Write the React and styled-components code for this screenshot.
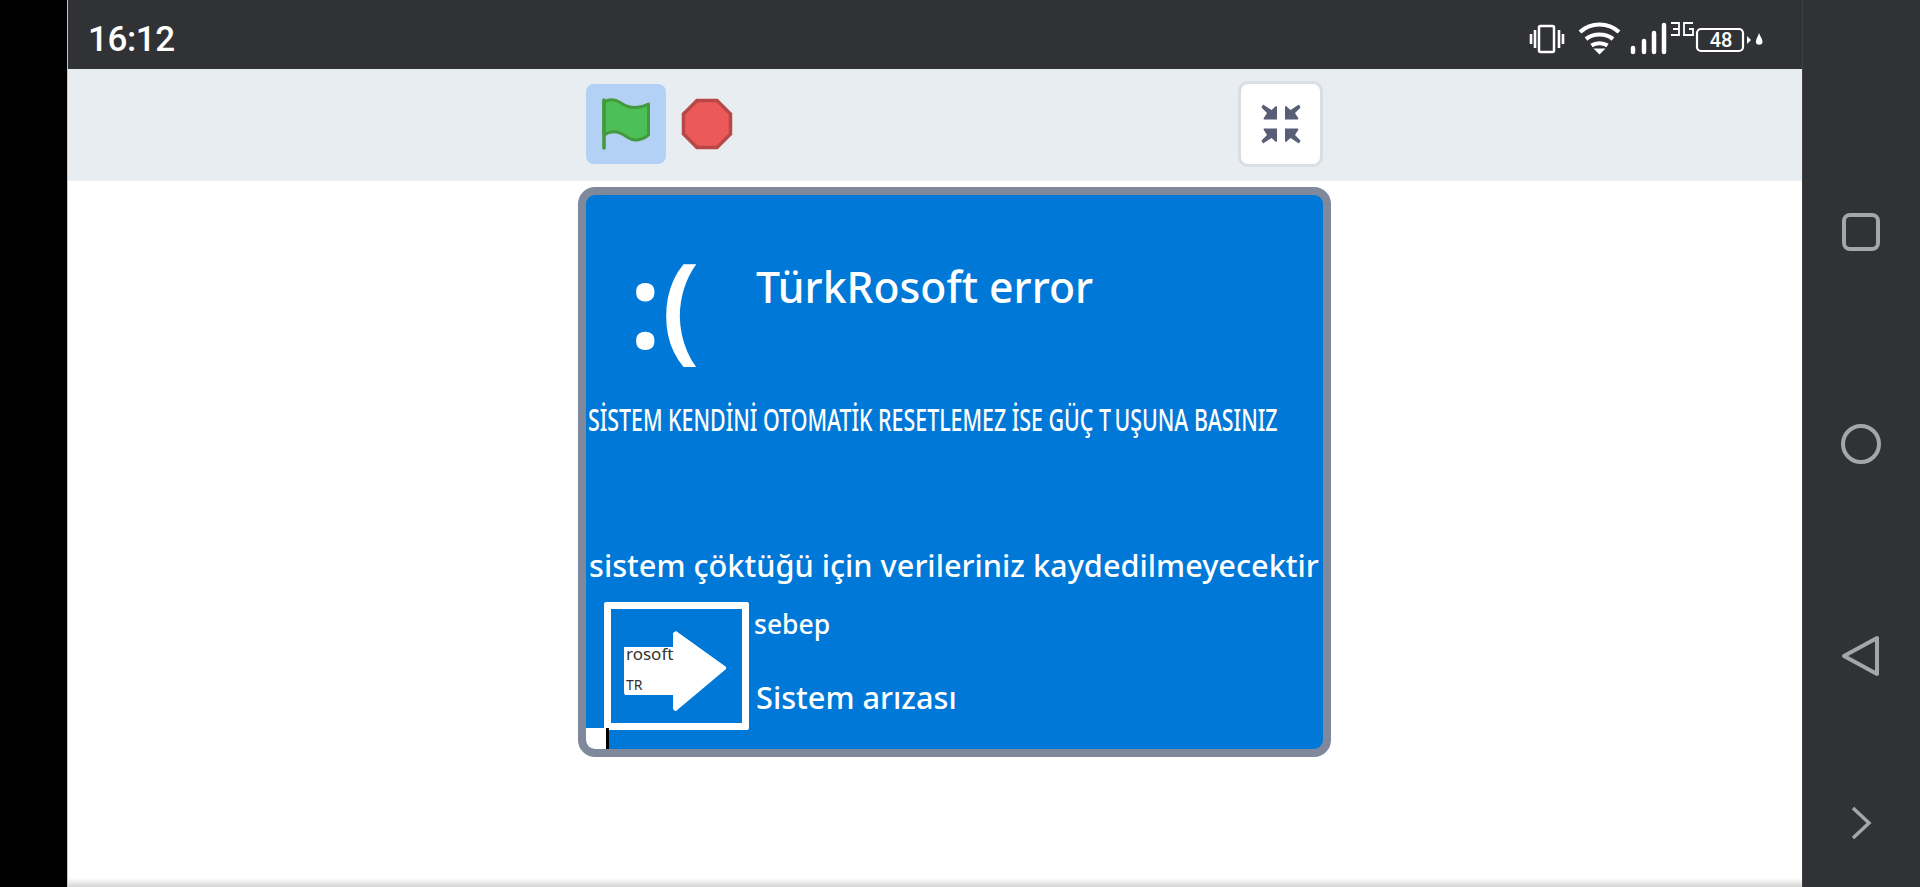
import React from "react";
import styled, { createGlobalStyle } from "styled-components";

const GlobalStyle = createGlobalStyle`
  html, body {
    margin: 0;
    padding: 0;
    background: #000;
  }
  body {
    font-family: "Noto Sans", "Open Sans", sans-serif;
  }
`;

const Screen = styled.div`
  width: 1920px;
  height: 887px;
  display: grid;
  grid-template-columns: 67px 1fr 118px;
  overflow: hidden;
`;
const LeftCutout = styled.div`
  background: #000;
`;
const Main = styled.div`
  display: flex;
  flex-direction: column;
  border-left: 1px solid #c4c4c4;
  background: #fff;
`;
const StatusBar = styled.div`
  height: 69px;
  flex: none;
  box-sizing: border-box;
  background: #313236;
  color: #fff;
  display: flex;
  align-items: flex-start;
  justify-content: space-between;
  padding: 20px 37px 0 20px;
`;
const Clock = styled.div`
  font-family: Roboto, sans-serif;
  font-size: 35px;
  font-weight: 500;
  line-height: 40px;
  letter-spacing: -0.4px;
`;
const StatusIcons = styled.svg`
  display: block;
  margin-top: 1px;
`;
const Toolbar = styled.div`
  height: 112px;
  flex: none;
  box-sizing: border-box;
  background: #e8edf1;
  border-bottom: 1px solid #eef1f4;
  display: flex;
  align-items: flex-start;
  padding: 13px 0 0 518px;
`;
const FlagButton = styled.div`
  width: 80px;
  height: 80px;
  margin-top: 2px;
  border-radius: 8px;
  background: #b3d1f5;
  display: flex;
  align-items: center;
  justify-content: center;
`;
const StopButton = styled.div`
  width: 52px;
  height: 80px;
  margin: 2px 0 0 15px;
  display: flex;
  align-items: center;
  justify-content: center;
`;
const FullscreenButton = styled.div`
  width: 85px;
  height: 86px;
  margin: -1px 0 0 505px;
  box-sizing: border-box;
  border: 3px solid #dadde1;
  border-radius: 10px;
  background: #fff;
  display: flex;
  align-items: center;
  justify-content: center;
`;
const StageArea = styled.div`
  flex: 1;
  padding: 6px 0 0 510px;
  background: linear-gradient(to bottom, #fff calc(100% - 9px), #d4d4d4 100%);
`;
const Stage = styled.div`
  position: relative;
  width: 753px;
  height: 570px;
  box-sizing: border-box;
  border: 8px solid #7f899b;
  border-radius: 17px;
  background: #0078d7;
  overflow: hidden;
  color: #fff;
`;
const Sad = styled.div`
  position: absolute;
  left: 43px;
  top: 38px;
  font-size: 118px;
  line-height: 140px;
  font-weight: 600;
  white-space: nowrap;
`;
const Title = styled.div`
  position: absolute;
  left: 170px;
  top: 62px;
  font-size: 42.7px;
  line-height: 60px;
  font-weight: 500;
  white-space: nowrap;
`;
const Warning = styled.div`
  position: absolute;
  left: 2px;
  top: 203px;
  font-size: 31px;
  line-height: 42px;
  font-weight: 500;
  white-space: nowrap;
  transform: scaleX(0.689);
  transform-origin: left center;
`;
const DataLine = styled.div`
  position: absolute;
  left: 3px;
  top: 349px;
  font-size: 30.7px;
  line-height: 42px;
  font-weight: 500;
  white-space: nowrap;
`;
const CauseLabel = styled.div`
  position: absolute;
  left: 168px;
  top: 411px;
  font-size: 26.5px;
  line-height: 36px;
  font-weight: 500;
  white-space: nowrap;
`;
const CauseText = styled.div`
  position: absolute;
  left: 170px;
  top: 481px;
  font-size: 30.7px;
  line-height: 42px;
  font-weight: 500;
  white-space: nowrap;
`;
const QrBox = styled.div`
  position: absolute;
  left: 18px;
  top: 407px;
  width: 145px;
  height: 128px;
  box-sizing: border-box;
  border: 7px solid #fff;
  border-radius: 2px;
`;
const ArrowTag = styled.div`
  position: absolute;
  left: ${(p) => p.$left}px;
  top: ${(p) => p.$top}px;
  font-size: ${(p) => p.$size}px;
  line-height: 20px;
  color: #333;
`;
const Corner = styled.div`
  position: absolute;
  left: 0;
  bottom: 0;
  width: 23px;
  height: 21px;
  box-sizing: border-box;
  background: #fff;
  border-right: 3px solid #000;
`;
const NavBar = styled.div`
  background: #313236;
  display: flex;
  flex-direction: column;
  align-items: center;
  padding-right: 1px;
  border-left: 1px solid #3f4044;
`;
const NavIcon = styled.svg`
  display: block;
  margin-top: ${(p) => p.$gap}px;
  color: #a5a6a8;
`;
const BigArrow = styled.svg`
  position: absolute;
  left: 11px;
  top: 21px;
`;

const StatusGlyphs = () => (
  <StatusIcons width="238" height="36" viewBox="0 0 238 36" fill="none" stroke="#fff">
    {/* vibrate */}
    <rect x="12" y="5" width="15" height="26" rx="1.500" strokeWidth="2.500" />
    <path d="M8 9v18M32 9v18" strokeWidth="2.600" />
    <path d="M4 13v10M36 13v10" strokeWidth="2.600" />
    {/* wifi */}
    <path d="M53 11c11-10 28-10 39 0M59 18c7.500-6 19.500-6 27 0M64.500 24.500c4.500-3 11.500-3 16 0" strokeWidth="4.200" />
    <path d="M66.500 27.500h12L72.500 33.500z" fill="#fff" stroke="none" />
    {/* signal */}
    <path d="M106 27v4M117 20v11M127 12v19M137 4v27" strokeWidth="4.500" strokeLinecap="round" />
    {/* 3G */}
    <path d="M144 2h8v6h-6M152 8v6h-8M166 2h-9v12h9V8h-4" strokeWidth="1.800" />
    {/* battery */}
    <rect x="170" y="8" width="46" height="22" rx="4" strokeWidth="2.200" />
    <text x="194" y="26" fill="#fff" stroke="none" fontFamily="Roboto, sans-serif" fontSize="20" fontWeight="500" textAnchor="middle">48</text>
    {/* charge */}
    <path d="M220 15l4 4-4 4z" fill="#fff" stroke="none" />
    <path d="M232 12c1.500 4 3.500 6 3.500 8.500a3.300 3.300 0 0 1-6.600 0c0-2.500 2-4.500 3.100-8.500z" fill="#fff" stroke="none" />
  </StatusIcons>
);

const GreenFlag = () => (
  <svg width="50" height="52" viewBox="0 0 50 52" fill="none">
    <path
      d="M3 4C8 1 14 1 20 5c6 4 16 7 27.500 1v31C42 42 33 44 26 39 18 33 10 32 3 37z"
      fill="#4cbf56"
      stroke="#45993d"
      strokeWidth="3"
      strokeLinejoin="round"
    />
    <path d="M3 2v48" stroke="#45993d" strokeWidth="3.600" strokeLinecap="round" />
  </svg>
);

const StopSign = () => (
  <svg width="52" height="52" viewBox="0 0 52 52">
    <path
      d="M16 2.500h20L49.500 16v20L36 49.500H16L2.500 36V16z"
      fill="#ec5959"
      stroke="#b84848"
      strokeWidth="3.500"
      strokeLinejoin="miter"
    />
  </svg>
);

const ShrinkArrow = ({ transform }) => (
  <path
    d="M2 0.500 0.500 3.500l5.500 5.500L2.500 14.500 3 15.500H16V2.500L15 2 10.500 6z"
    transform={transform}
  />
);

const Shrink = () => (
  <svg width="42" height="42" viewBox="0 0 42 42" fill="#575e75">
    <ShrinkArrow transform="translate(1 1)" />
    <ShrinkArrow transform="translate(41 1) scale(-1 1)" />
    <ShrinkArrow transform="translate(1 41) scale(1 -1)" />
    <ShrinkArrow transform="translate(41 41) scale(-1 -1)" />
  </svg>
);

export default function App() {
  return (
    <>
      <GlobalStyle />
      <Screen>
        <LeftCutout />
        <Main>
          <StatusBar>
            <Clock>16:12</Clock>
            <StatusGlyphs />
          </StatusBar>
          <Toolbar>
            <FlagButton>
              <GreenFlag />
            </FlagButton>
            <StopButton>
              <StopSign />
            </StopButton>
            <FullscreenButton>
              <Shrink />
            </FullscreenButton>
          </Toolbar>
          <StageArea>
            <Stage>
              <Sad>:(</Sad>
              <Title>TürkRosoft error</Title>
              <Warning>SİSTEM KENDİNİ OTOMATİK RESETLEMEZ İSE GÜÇ T{"\u2009"}UŞUNA BASINIZ</Warning>
              <DataLine>sistem çöktüğü için verileriniz kaydedilmeyecektir</DataLine>
              <CauseLabel>sebep</CauseLabel>
              <CauseText>Sistem arızası</CauseText>
              <QrBox>
                <BigArrow width="106" height="84" viewBox="0 0 106 84">
                  <path
                    d="M2 17h49V3l3-2 49.500 35.500a2 2 0 0 1 0 3L54 81h-1l-2-2V65H3l-1-2z"
                    fill="#fff"
                  />
                </BigArrow>
                <ArrowTag $left={15} $top={35} $size={17}>rosoft</ArrowTag>
                <ArrowTag $left={15} $top={66} $size={14}>TR</ArrowTag>
              </QrBox>
              <Corner />
            </Stage>
          </StageArea>
        </Main>
        <NavBar>
          <NavIcon $gap={212} width="40" height="40" viewBox="0 0 40 40" fill="none" stroke="currentColor" strokeWidth="4">
            <rect x="3" y="3" width="34" height="34" rx="6" />
          </NavIcon>
          <NavIcon $gap={171} width="42" height="42" viewBox="0 0 42 42" fill="none" stroke="currentColor" strokeWidth="4">
            <circle cx="21" cy="21" r="18" />
          </NavIcon>
          <NavIcon $gap={170} width="40" height="42" viewBox="0 0 40 42" fill="none" stroke="currentColor" strokeWidth="4" strokeLinejoin="round">
            <path d="M36 3v36L3 21z" />
          </NavIcon>
          <NavIcon $gap={129} width="22" height="34" viewBox="0 0 22 34" fill="none" stroke="currentColor" strokeWidth="3.500">
            <path d="M3 2l16 15L3 32" />
          </NavIcon>
        </NavBar>
      </Screen>
    </>
  );
}
